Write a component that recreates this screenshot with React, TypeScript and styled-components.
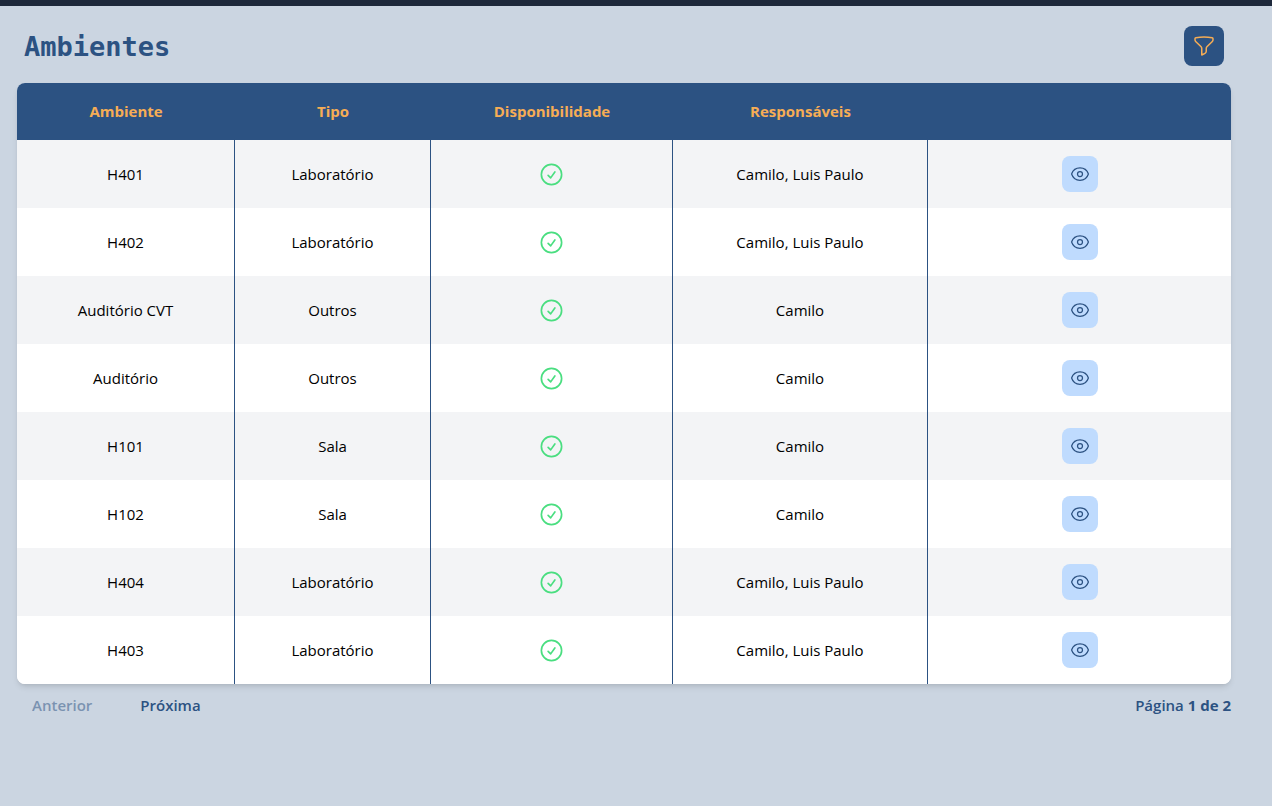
import React from "react";
import styled, { createGlobalStyle } from "styled-components";
import { HiOutlineCheckCircle, HiOutlineEye, HiOutlineFunnel } from "react-icons/hi2";

const colors = {
  navy: "#2c5282",
  orange: "#f6ad55",
  page: "#cbd5e1",
  topBar: "#1e293b",
  stripe: "#f3f4f6",
  green: "#4ade80",
  lightBlue: "#bfdbfe",
};

const GlobalStyle = createGlobalStyle`
  *, *::before, *::after { box-sizing: border-box; }
  body {
    margin: 0;
    background: ${colors.page};
    font-family: "Open Sans", "Noto Sans", sans-serif;
    font-size: 15px;
    line-height: 24px;
    color: #000;
  }
  button { font: inherit; border: 0; margin: 0; cursor: pointer; }
`;

const Page = styled.div`
  min-height: 100vh;
  border-top: 6px solid ${colors.topBar};
`;

const Content = styled.main`
  padding: 20px 41px 20px 17px;
`;

const Header = styled.header`
  display: flex;
  align-items: center;
  justify-content: space-between;
  padding: 0 7px;
  margin-bottom: 17px;
`;

const Title = styled.h1`
  margin: 0;
  padding-top: 2px;
  font-family: "DejaVu Sans Mono", monospace;
  font-size: 27px;
  line-height: 38px;
  font-weight: 700;
  color: ${colors.navy};
`;

const IconButton = styled.button<{ $variant: "filter" | "view" }>`
  display: inline-flex;
  padding: 8px;
  border-radius: 8px;
  vertical-align: middle;
  color: ${(p) => (p.$variant === "filter" ? colors.orange : colors.navy)};
  background: ${(p) => (p.$variant === "filter" ? colors.navy : colors.lightBlue)};
`;

const TableCard = styled.div`
  overflow: hidden;
  border-radius: 8px;
  background: #fff;
  box-shadow: 0 4px 6px -1px rgba(0, 0, 0, 0.1), 0 2px 4px -2px rgba(0, 0, 0, 0.1);
`;

const Table = styled.table`
  width: 100%;
  border-collapse: separate;
  border-spacing: 0;
  text-align: center;
`;

const Column = styled.col<{ $width: number }>`
  width: ${(p) => p.$width}px;
`;

const HeadCell = styled.th`
  height: 57px;
  padding: 0 0 2px;
  font-weight: 700;
  color: ${colors.orange};
  background: ${colors.navy};
`;

const Row = styled.tr`
  background: #fff;
  &:nth-child(odd) { background: ${colors.stripe}; }
`;

const Cell = styled.td`
  height: 68px;
  padding: 0;
  &:not(:last-child) { border-right: 1px solid ${colors.navy}; }
`;

const Available = styled(HiOutlineCheckCircle)`
  display: block;
  margin: 0 auto;
  color: ${colors.green};
`;

const Footer = styled.footer`
  display: flex;
  align-items: center;
  justify-content: space-between;
  padding: 9px 0 0 15px;
  font-weight: 600;
  color: ${colors.navy};
`;

const Pager = styled.nav`
  display: flex;
  gap: 48px;
`;

const PageButton = styled.button`
  padding: 0;
  background: none;
  color: ${colors.navy};
  &:disabled { opacity: 0.5; cursor: default; }
`;

const PageStatus = styled.span`
  strong { font-weight: 700; }
`;

const columns = [
  { label: "Ambiente", width: 218 },
  { label: "Tipo", width: 196 },
  { label: "Disponibilidade", width: 242 },
  { label: "Responsáveis", width: 255 },
  { label: "", width: 303 },
];

const rooms = [
  { name: "H401", type: "Laboratório", owners: "Camilo, Luis Paulo" },
  { name: "H402", type: "Laboratório", owners: "Camilo, Luis Paulo" },
  { name: "Auditório CVT", type: "Outros", owners: "Camilo" },
  { name: "Auditório", type: "Outros", owners: "Camilo" },
  { name: "H101", type: "Sala", owners: "Camilo" },
  { name: "H102", type: "Sala", owners: "Camilo" },
  { name: "H404", type: "Laboratório", owners: "Camilo, Luis Paulo" },
  { name: "H403", type: "Laboratório", owners: "Camilo, Luis Paulo" },
];

export default function App() {
  return (
    <Page>
      <GlobalStyle />
      <Content>
        <Header>
          <Title>Ambientes</Title>
          <IconButton type="button" $variant="filter" aria-label="Filtrar">
            <HiOutlineFunnel size={24} />
          </IconButton>
        </Header>
        <TableCard>
          <Table>
            <colgroup>
              {columns.map((c) => (
                <Column key={c.label} $width={c.width} />
              ))}
            </colgroup>
            <thead>
              <tr>
                {columns.map((c) => (
                  <HeadCell key={c.label} scope="col">{c.label}</HeadCell>
                ))}
              </tr>
            </thead>
            <tbody>
              {rooms.map((room) => (
                <Row key={room.name}>
                  <Cell>{room.name}</Cell>
                  <Cell>{room.type}</Cell>
                  <Cell>
                    <Available size={27} role="img" aria-label="Disponível" />
                  </Cell>
                  <Cell>{room.owners}</Cell>
                  <Cell>
                    <IconButton type="button" $variant="view" aria-label={`Ver ${room.name}`}>
                      <HiOutlineEye size={20} />
                    </IconButton>
                  </Cell>
                </Row>
              ))}
            </tbody>
          </Table>
        </TableCard>
        <Footer>
          <Pager aria-label="Paginação">
            <PageButton type="button" disabled>Anterior</PageButton>
            <PageButton type="button">Próxima</PageButton>
          </Pager>
          <PageStatus>
            Página <strong>1 de 2</strong>
          </PageStatus>
        </Footer>
      </Content>
    </Page>
  );
}
